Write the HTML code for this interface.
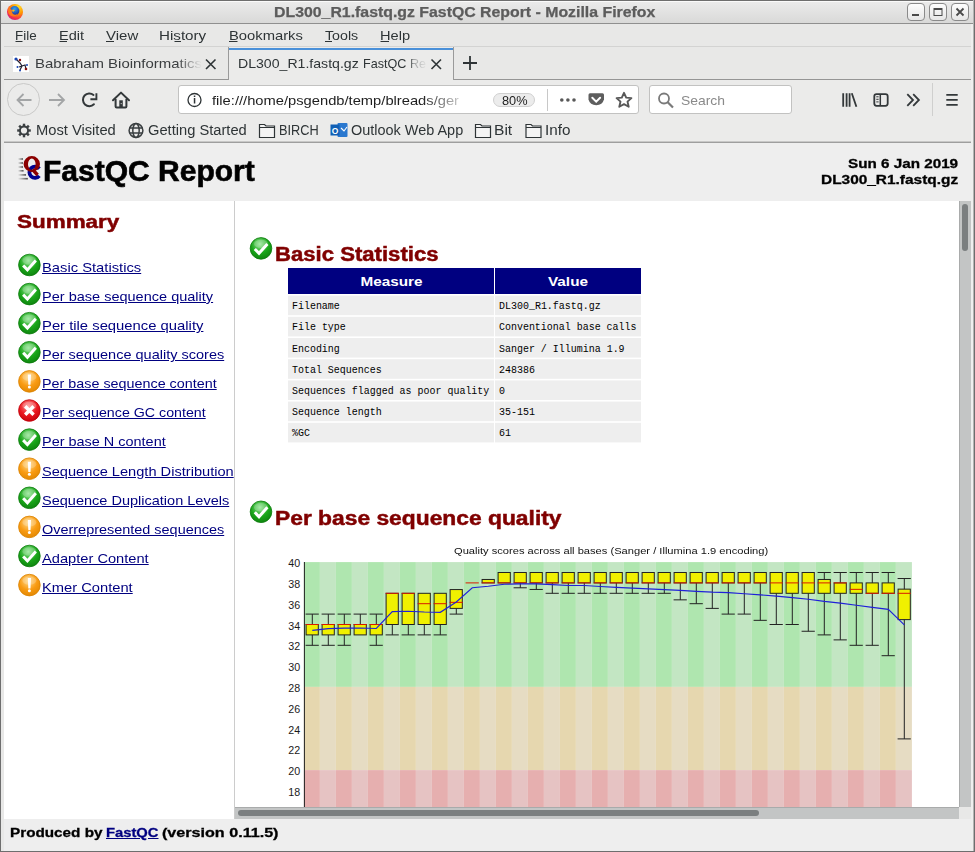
<!DOCTYPE html>
<html><head><meta charset="utf-8">
<style>
html,body{margin:0;padding:0;}
body{width:975px;height:852px;overflow:hidden;position:relative;background:#e8e8e7;font-family:"Liberation Sans",sans-serif;}
.a{position:absolute;}
.t{position:absolute;white-space:pre;line-height:1;transform-origin:0 0;}
svg{position:absolute;left:0;top:0;overflow:visible;}
</style></head><body>
<div class=a style='left:0;top:0;width:975px;height:852px;background:#e8e8e7'></div>
<div class=a style='left:0;top:0;width:975px;height:23px;background:linear-gradient(#ececec,#d9d9d8)'></div>
<div class=a style='left:0;top:0;width:975px;height:1px;background:#6e6e6e'></div>
<div class=a style='left:1px;top:1px;width:972px;height:1px;background:#fafafa'></div>
<div class=a style='left:0;top:23px;width:975px;height:1px;background:#8f8f8f'></div>
<div class=a style='left:1px;top:24px;width:972px;height:22px;background:#e8e8e7'></div>
<div class=a style='left:4px;top:46px;width:967px;height:1px;background:#d3d3d2'></div>
<div class=a style='left:4px;top:79px;width:967px;height:1px;background:#959595'></div>
<div class=a style='left:228px;top:47px;width:1px;height:33px;background:#9a9a9a'></div>
<div class=a style='left:229px;top:47px;width:224px;height:33px;background:#ebebea'></div>
<div class=a style='left:229px;top:48px;width:224px;height:2px;background:#4a90d9'></div>
<div class=a style='left:453px;top:47px;width:1px;height:33px;background:#9a9a9a'></div>
<div class=a style='left:4px;top:80px;width:967px;height:62px;background:#ebebea'></div>
<div class=a style='left:4px;top:141px;width:967px;height:1px;background:#c8c8c7'></div>
<div class=a style='left:4px;top:142px;width:967px;height:1px;background:#9e9e9e'></div>
<div class=a style='left:0;top:0;width:1px;height:852px;background:#6e6e6e'></div>
<div class=a style='left:971px;top:24px;width:3px;height:827px;background:#efefee'></div>
<div class=a style='left:973px;top:0;width:1px;height:852px;background:#b4b4b4'></div>
<div class=a style='left:974px;top:0;width:1px;height:852px;background:#6e6e6e'></div>
<div class=a style='left:0;top:851px;width:975px;height:1px;background:#6e6e6e'></div>
<div class=a style='left:178px;top:85px;width:461px;height:29px;box-sizing:border-box;border:1px solid #c2c2c1;border-radius:3px;background:#fff'></div>
<div class=a style='left:493px;top:93px;width:42px;height:14px;box-sizing:border-box;border:1px solid #d0d0d0;border-radius:7px;background:#ececec'></div>
<div class=a style='left:547px;top:89px;width:1px;height:22px;background:#c8c8c8'></div>
<div class=a style='left:649px;top:85px;width:143px;height:29px;box-sizing:border-box;border:1px solid #c2c2c1;border-radius:3px;background:#fff'></div>
<div class=a style='left:932px;top:83px;width:1px;height:33px;background:#cfcfce'></div>
<div class=a style='left:7px;top:83px;width:33px;height:33px;box-sizing:border-box;border:1px solid #c9c9c8;border-radius:50%;background:#ebebea'></div>
<div class=a style='left:4px;top:143px;width:967px;height:58px;background:#eeeeee'></div>
<div class=a style='left:4px;top:201px;width:230px;height:618px;background:#fff'></div>
<div class=a style='left:234px;top:201px;width:1px;height:606px;background:#cccccc'></div>
<div class=a style='left:235px;top:201px;width:724px;height:606px;background:#fff'></div>
<div class=a style='left:959px;top:201px;width:12px;height:606px;background:#c3c5c5;border-left:1px solid #a9abab;box-sizing:border-box'></div>
<div class=a style='left:962px;top:204px;width:6px;height:47px;background:#7b7f80;border-radius:3px'></div>
<div class=a style='left:235px;top:807px;width:724px;height:12px;background:#c3c5c5;border-top:1px solid #a9abab;box-sizing:border-box'></div>
<div class=a style='left:238px;top:810px;width:521px;height:6px;background:#7b7f80;border-radius:3px'></div>
<div class=a style='left:959px;top:807px;width:12px;height:12px;background:#e8e8e7'></div>
<div class=a style='left:234px;top:807px;width:1px;height:12px;background:#cccccc'></div>
<div class=a style='left:4px;top:819px;width:967px;height:32px;background:#eeeeee'></div>
<div class=a style='left:907px;top:3px;width:18px;height:18px;box-sizing:border-box;border:1px solid #8a8a8a;border-radius:4px;background:linear-gradient(#fdfdfd,#e6e6e6)'></div>
<div class=a style='left:929px;top:3px;width:18px;height:18px;box-sizing:border-box;border:1px solid #8a8a8a;border-radius:4px;background:linear-gradient(#fdfdfd,#e6e6e6)'></div>
<div class=a style='left:951px;top:3px;width:18px;height:18px;box-sizing:border-box;border:1px solid #8a8a8a;border-radius:4px;background:linear-gradient(#fdfdfd,#e6e6e6)'></div>
<svg width='975' height='852' viewBox='0 0 975 852'>
<rect x='912' y='14' width='7' height='2' fill='#4a4a4a'/>
<rect x='934' y='8.5' width='8' height='7' fill='none' stroke='#4a4a4a' stroke-width='1'/><rect x='934' y='8' width='8' height='2' fill='#4a4a4a'/>
<path d='M956.5 8.5 L963.5 15.5 M963.5 8.5 L956.5 15.5' stroke='#4a4a4a' stroke-width='1.8'/>
<defs><radialGradient id='ff' cx='0.7' cy='0.2' r='0.9'><stop offset='0' stop-color='#ffe226'/><stop offset='0.45' stop-color='#ff9500'/><stop offset='0.8' stop-color='#f5304a'/><stop offset='1' stop-color='#c1238a'/></radialGradient><radialGradient id='fb' cx='0.5' cy='0.3' r='0.6'><stop offset='0' stop-color='#2ba4f5'/><stop offset='1' stop-color='#243a9e'/></radialGradient></defs>
<circle cx='15' cy='12' r='8' fill='url(#ff)'/><circle cx='14.6' cy='10.8' r='4.8' fill='url(#fb)'/><path d='M9 6.5 Q10 9 12 10 Q11 12.5 13 14 Q15.5 15.5 18.5 13.5 Q16 17.5 11.5 16 Q8 14.5 8 11 Q8 8 9 6.5Z' fill='#ff7a1a'/><path d='M12 10 Q13.5 9 15 10.5 Q13.5 11 13 12.5Z' fill='#ffb21a'/>
<rect x='15.5' y='41' width='7.0' height='1' fill='#2e3436'/>
<rect x='59.5' y='41' width='7.5' height='1' fill='#2e3436'/>
<rect x='106' y='41' width='8' height='1' fill='#2e3436'/>
<rect x='174.5' y='41' width='6.5' height='1' fill='#2e3436'/>
<rect x='229' y='41' width='8.5' height='1' fill='#2e3436'/>
<rect x='325' y='41' width='7' height='1' fill='#2e3436'/>
<rect x='380.5' y='41' width='8.5' height='1' fill='#2e3436'/>
<rect x='13' y='56' width='16' height='16' fill='#fff'/>
<path d='M16 59 L20 63 L22 66 M19 67 L22 66 L25 65 L26 69 M20 70 L22 66' stroke='#223' stroke-width='1.2' fill='none'/><circle cx='16' cy='59' r='1.6' fill='#1844b0'/><circle cx='20' cy='60' r='1.2' fill='#8b1010'/><circle cx='26' cy='69' r='1.3' fill='#8b1010'/><circle cx='17.5' cy='67' r='1' fill='#1844b0'/><circle cx='20' cy='70.5' r='1' fill='#1844b0'/><circle cx='27' cy='65' r='1' fill='#1844b0'/>
<path d='M206 59.5 L215.5 69 M215.5 59.5 L206 69' stroke='#2e3436' stroke-width='1.6'/>
<path d='M431.5 59.5 L441 69 M441 59.5 L431.5 69' stroke='#2e3436' stroke-width='1.6'/>
<path d='M463 63 H477 M470 56 V70' stroke='#2e3436' stroke-width='1.8'/>
<path d='M31.5 100 H17.5 M23.5 94 L17.5 100 L23.5 106' stroke='#a3a5a6' stroke-width='1.8' fill='none'/>
<path d='M49 100 H64 M58 94 L64 100 L58 106' stroke='#a3a5a6' stroke-width='1.8' fill='none'/>
<path d='M93.5 94.9 A6.4 6.4 0 1 0 93.9 104.3' stroke='#33383a' stroke-width='2' fill='none' stroke-linecap='round'/><path d='M96.4 93.2 V99.2 H90.4' stroke='#33383a' stroke-width='1.9' fill='none'/>
<path d='M113 100.3 L121 92.6 L129 100.3' stroke='#33383a' stroke-width='2' fill='none' stroke-linejoin='round' stroke-linecap='round'/><path d='M115.6 99 V106.5 Q115.6 107.5 116.6 107.5 H125.4 Q126.4 107.5 126.4 106.5 V99' stroke='#33383a' stroke-width='2' fill='none'/><rect x='119.3' y='100.3' width='3.5' height='7' fill='#33383a'/><circle cx='121.2' cy='103.6' r='0.6' fill='#ddd'/>
<circle cx='194.5' cy='100' r='6.5' stroke='#2e3436' stroke-width='1.3' fill='none'/><rect x='193.8' y='98' width='1.5' height='5.5' fill='#2e3436'/><rect x='193.8' y='95.5' width='1.5' height='1.5' fill='#2e3436'/>
<circle cx='561.8' cy='100' r='1.8' fill='#585858'/><circle cx='567.9' cy='100' r='1.8' fill='#585858'/><circle cx='574' cy='100' r='1.8' fill='#585858'/>
<path d='M590 93.2 H602.5 Q604 93.2 604 94.7 V99.5 A8 7.5 0 0 1 588.5 99.5 V94.7 Q588.5 93.2 590 93.2 Z' fill='#5e5e5e'/><path d='M592.3 97.8 L596.2 101.6 L600.1 97.8' stroke='#fff' stroke-width='2' fill='none' stroke-linecap='round'/>
<path d='M624 92.8 L626.2 97.6 L631.4 98.1 L627.5 101.6 L628.7 106.8 L624 104.1 L619.3 106.8 L620.5 101.6 L616.6 98.1 L621.8 97.6 Z' stroke='#585858' stroke-width='1.9' fill='none' stroke-linejoin='round'/>
<circle cx='664' cy='98.5' r='5' stroke='#7a7a7a' stroke-width='1.8' fill='none'/><path d='M667.5 102 L673 107.5' stroke='#7a7a7a' stroke-width='2.2'/>
<path d='M843.2 93.3 V106.7 M846.6 93.3 V106.7 M849.6 93.3 V106.7 M851.8 93.3 L856.4 106.7' stroke='#33383a' stroke-width='1.8'/>
<rect x='874.3' y='94.2' width='13.4' height='11.6' rx='2.2' stroke='#33383a' stroke-width='1.8' fill='none'/><path d='M880.3 94 V106' stroke='#33383a' stroke-width='1.5'/><path d='M876.3 96.8 H878.6 M876.3 99.3 H878.6 M876.3 101.9 H878.6' stroke='#33383a' stroke-width='1'/>
<path d='M907.3 94.2 L913 100 L907.3 105.8 M913.2 94.2 L918.9 100 L913.2 105.8' stroke='#33383a' stroke-width='1.8' fill='none'/>
<path d='M946.3 94.8 H957.7 M946.3 99.8 H957.7 M946.3 104.8 H957.7' stroke='#33383a' stroke-width='1.7'/>
<g transform='translate(24,130.5)'><circle r='4.1' stroke='#3a3f41' stroke-width='2' fill='none'/><rect x='-1.2' y='-6.8' width='2.4' height='3' fill='#3a3f41' transform='rotate(0)'/><rect x='-1.2' y='-6.8' width='2.4' height='3' fill='#3a3f41' transform='rotate(45)'/><rect x='-1.2' y='-6.8' width='2.4' height='3' fill='#3a3f41' transform='rotate(90)'/><rect x='-1.2' y='-6.8' width='2.4' height='3' fill='#3a3f41' transform='rotate(135)'/><rect x='-1.2' y='-6.8' width='2.4' height='3' fill='#3a3f41' transform='rotate(180)'/><rect x='-1.2' y='-6.8' width='2.4' height='3' fill='#3a3f41' transform='rotate(225)'/><rect x='-1.2' y='-6.8' width='2.4' height='3' fill='#3a3f41' transform='rotate(270)'/><rect x='-1.2' y='-6.8' width='2.4' height='3' fill='#3a3f41' transform='rotate(315)'/></g>
<g transform='translate(136,130.5)' stroke='#3a3f41' fill='none' stroke-width='1.5'><circle r='6.9'/><ellipse rx='3.2' ry='6.9'/><path d='M-6.5 -2.6 H6.5 M-6.5 2.6 H6.5'/></g>
<path d='M259.5 124.5 H264.5 L266 126 H274.5 V137.5 H259.5 Z M259.5 127.5 H274.5' stroke='#2e3436' stroke-width='1.2' fill='#f4f4f4'/>
<path d='M475.5 124.5 H480.5 L482 126 H490.5 V137.5 H475.5 Z M475.5 127.5 H490.5' stroke='#2e3436' stroke-width='1.2' fill='#f4f4f4'/>
<path d='M526.0 124.5 H531.0 L532.5 126 H541.0 V137.5 H526.0 Z M526.0 127.5 H541.0' stroke='#2e3436' stroke-width='1.2' fill='#f4f4f4'/>
<rect x='337.5' y='123' width='10' height='14' rx='1' fill='#2a78cf'/><rect x='330.5' y='124.5' width='9' height='11' fill='#0f5fb5'/><text x='335' y='133.5' font-family='Liberation Sans' font-weight='700' font-size='8.5' fill='#fff' text-anchor='middle'>O</text><path d='M341 128 L344 131 L347 127' stroke='#fff' stroke-width='1.1' fill='none'/>
</svg>
<svg width='975' height='852' viewBox='0 0 975 852'>
<defs>
<radialGradient id='gok' cx='0.45' cy='0.3' r='0.75'><stop offset='0' stop-color='#8fe58f'/><stop offset='0.55' stop-color='#19a619'/><stop offset='1' stop-color='#0d800d'/></radialGradient>
<radialGradient id='gwarn' cx='0.45' cy='0.3' r='0.75'><stop offset='0' stop-color='#ffd98a'/><stop offset='0.55' stop-color='#f99b12'/><stop offset='1' stop-color='#e08600'/></radialGradient>
<radialGradient id='gerr' cx='0.45' cy='0.3' r='0.75'><stop offset='0' stop-color='#ff9090'/><stop offset='0.55' stop-color='#ea1820'/><stop offset='1' stop-color='#c4000a'/></radialGradient>
<clipPath id='plotclip'><rect x='235' y='201' width='724' height='606'/></clipPath>
</defs>
<linearGradient id='lg' x1='0' x2='1'><stop offset='0' stop-color='#eeeeee'/><stop offset='1' stop-color='#4a4a4a'/></linearGradient>
<rect x='18' y='158.2' width='5' height='1.6' fill='url(#lg)'/>
<rect x='18' y='162.2' width='5' height='1.6' fill='url(#lg)'/>
<rect x='18' y='166.2' width='5' height='1.6' fill='url(#lg)'/>
<rect x='18' y='170.0' width='5.5' height='1.6' fill='url(#lg)'/>
<rect x='18' y='174.1' width='8' height='1.6' fill='url(#lg)'/>
<rect x='18' y='177.89999999999998' width='9.8' height='1.6' fill='url(#lg)'/>
<path d='M39.3 168.7 A5.6 5.6 0 1 0 39.3 175.9' stroke='#00008f' stroke-width='3.8' fill='none'/>
<path fill-rule='evenodd' fill='#8b0000' d='M23.6 164 A8.2 7.9 0 1 0 40 164 A8.2 7.9 0 1 0 23.6 164 Z M28 164.2 A3.8 5.6 0 1 0 35.6 164.2 A3.8 5.6 0 1 0 28 164.2 Z'/>
<path d='M32.6 169.6 L37.6 175' stroke='#8b0000' stroke-width='3.4'/>
<circle cx='29.4' cy='265.0' r='10.8' fill='url(#gok)' stroke='#0b7a0b' stroke-width='0.8'/><ellipse cx='29.4' cy='260.5' rx='7' ry='4.2' fill='#fff' opacity='0.22'/><path d='M24.2 266.6 L27.4 269.9 L34.8 261.6' stroke='#fff' stroke-width='3.0' fill='none' stroke-linecap='square'/>
<circle cx='29.4' cy='294.1' r='10.8' fill='url(#gok)' stroke='#0b7a0b' stroke-width='0.8'/><ellipse cx='29.4' cy='289.6' rx='7' ry='4.2' fill='#fff' opacity='0.22'/><path d='M24.2 295.70000000000005 L27.4 299.0 L34.8 290.70000000000005' stroke='#fff' stroke-width='3.0' fill='none' stroke-linecap='square'/>
<circle cx='29.4' cy='323.2' r='10.8' fill='url(#gok)' stroke='#0b7a0b' stroke-width='0.8'/><ellipse cx='29.4' cy='318.7' rx='7' ry='4.2' fill='#fff' opacity='0.22'/><path d='M24.2 324.8 L27.4 328.09999999999997 L34.8 319.8' stroke='#fff' stroke-width='3.0' fill='none' stroke-linecap='square'/>
<circle cx='29.4' cy='352.3' r='10.8' fill='url(#gok)' stroke='#0b7a0b' stroke-width='0.8'/><ellipse cx='29.4' cy='347.8' rx='7' ry='4.2' fill='#fff' opacity='0.22'/><path d='M24.2 353.90000000000003 L27.4 357.2 L34.8 348.90000000000003' stroke='#fff' stroke-width='3.0' fill='none' stroke-linecap='square'/>
<circle cx='29.4' cy='381.4' r='10.8' fill='url(#gwarn)' stroke='#d98200' stroke-width='0.8'/><ellipse cx='29.4' cy='376.9' rx='7' ry='4.2' fill='#fff' opacity='0.22'/><path d='M27.799999999999997 374.4 H31.0 L30.5 384.79999999999995 H28.299999999999997 Z' fill='#fff'/><circle cx='29.4' cy='387.0' r='1.5' fill='#fff'/>
<circle cx='29.4' cy='410.5' r='10.8' fill='url(#gerr)' stroke='#c00008' stroke-width='0.8'/><ellipse cx='29.4' cy='406.0' rx='7' ry='4.2' fill='#fff' opacity='0.22'/><path d='M25.2 406.3 L33.6 414.7 M33.6 406.3 L25.2 414.7' stroke='#fff' stroke-width='3.4'/>
<circle cx='29.4' cy='439.6' r='10.8' fill='url(#gok)' stroke='#0b7a0b' stroke-width='0.8'/><ellipse cx='29.4' cy='435.1' rx='7' ry='4.2' fill='#fff' opacity='0.22'/><path d='M24.2 441.20000000000005 L27.4 444.5 L34.8 436.20000000000005' stroke='#fff' stroke-width='3.0' fill='none' stroke-linecap='square'/>
<circle cx='29.4' cy='468.70000000000005' r='10.8' fill='url(#gwarn)' stroke='#d98200' stroke-width='0.8'/><ellipse cx='29.4' cy='464.20000000000005' rx='7' ry='4.2' fill='#fff' opacity='0.22'/><path d='M27.799999999999997 461.70000000000005 H31.0 L30.5 472.1 H28.299999999999997 Z' fill='#fff'/><circle cx='29.4' cy='474.30000000000007' r='1.5' fill='#fff'/>
<circle cx='29.4' cy='497.8' r='10.8' fill='url(#gok)' stroke='#0b7a0b' stroke-width='0.8'/><ellipse cx='29.4' cy='493.3' rx='7' ry='4.2' fill='#fff' opacity='0.22'/><path d='M24.2 499.40000000000003 L27.4 502.7 L34.8 494.40000000000003' stroke='#fff' stroke-width='3.0' fill='none' stroke-linecap='square'/>
<circle cx='29.4' cy='526.9000000000001' r='10.8' fill='url(#gwarn)' stroke='#d98200' stroke-width='0.8'/><ellipse cx='29.4' cy='522.4000000000001' rx='7' ry='4.2' fill='#fff' opacity='0.22'/><path d='M27.799999999999997 519.9000000000001 H31.0 L30.5 530.3000000000001 H28.299999999999997 Z' fill='#fff'/><circle cx='29.4' cy='532.5000000000001' r='1.5' fill='#fff'/>
<circle cx='29.4' cy='556.0' r='10.8' fill='url(#gok)' stroke='#0b7a0b' stroke-width='0.8'/><ellipse cx='29.4' cy='551.5' rx='7' ry='4.2' fill='#fff' opacity='0.22'/><path d='M24.2 557.6 L27.4 560.9 L34.8 552.6' stroke='#fff' stroke-width='3.0' fill='none' stroke-linecap='square'/>
<circle cx='29.4' cy='585.1' r='10.8' fill='url(#gwarn)' stroke='#d98200' stroke-width='0.8'/><ellipse cx='29.4' cy='580.6' rx='7' ry='4.2' fill='#fff' opacity='0.22'/><path d='M27.799999999999997 578.1 H31.0 L30.5 588.5 H28.299999999999997 Z' fill='#fff'/><circle cx='29.4' cy='590.7' r='1.5' fill='#fff'/>
<circle cx='261.0' cy='248.4' r='10.8' fill='url(#gok)' stroke='#0b7a0b' stroke-width='0.8'/><ellipse cx='261.0' cy='243.9' rx='7' ry='4.2' fill='#fff' opacity='0.22'/><path d='M255.8 250.0 L259.0 253.3 L266.4 245.0' stroke='#fff' stroke-width='3.0' fill='none' stroke-linecap='square'/>
<circle cx='261.0' cy='511.8' r='10.8' fill='url(#gok)' stroke='#0b7a0b' stroke-width='0.8'/><ellipse cx='261.0' cy='507.3' rx='7' ry='4.2' fill='#fff' opacity='0.22'/><path d='M255.8 513.4 L259.0 516.7 L266.4 508.40000000000003' stroke='#fff' stroke-width='3.0' fill='none' stroke-linecap='square'/>
<rect x='288' y='268' width='206' height='26' fill='#000080'/><rect x='495' y='268' width='146' height='26' fill='#000080'/>
<rect x='288' y='295.6' width='206' height='19.6' fill='#eeeeee'/><rect x='495' y='295.6' width='146' height='19.6' fill='#eeeeee'/>
<text x='292' y='309.2' font-family='Liberation Mono' font-size='11' fill='#000' textLength='47.8' lengthAdjust='spacingAndGlyphs'>Filename</text>
<text x='499' y='309.2' font-family='Liberation Mono' font-size='11' fill='#000' textLength='101.7' lengthAdjust='spacingAndGlyphs'>DL300_R1.fastq.gz</text>
<rect x='288' y='316.8' width='206' height='19.6' fill='#eeeeee'/><rect x='495' y='316.8' width='146' height='19.6' fill='#eeeeee'/>
<text x='292' y='330.4' font-family='Liberation Mono' font-size='11' fill='#000' textLength='53.8' lengthAdjust='spacingAndGlyphs'>File type</text>
<text x='499' y='330.4' font-family='Liberation Mono' font-size='11' fill='#000' textLength='137.5' lengthAdjust='spacingAndGlyphs'>Conventional base calls</text>
<rect x='288' y='338.0' width='206' height='19.6' fill='#eeeeee'/><rect x='495' y='338.0' width='146' height='19.6' fill='#eeeeee'/>
<text x='292' y='351.6' font-family='Liberation Mono' font-size='11' fill='#000' textLength='47.8' lengthAdjust='spacingAndGlyphs'>Encoding</text>
<text x='499' y='351.6' font-family='Liberation Mono' font-size='11' fill='#000' textLength='125.6' lengthAdjust='spacingAndGlyphs'>Sanger / Illumina 1.9</text>
<rect x='288' y='359.2' width='206' height='19.6' fill='#eeeeee'/><rect x='495' y='359.2' width='146' height='19.6' fill='#eeeeee'/>
<text x='292' y='372.8' font-family='Liberation Mono' font-size='11' fill='#000' textLength='89.7' lengthAdjust='spacingAndGlyphs'>Total Sequences</text>
<text x='499' y='372.8' font-family='Liberation Mono' font-size='11' fill='#000' textLength='35.9' lengthAdjust='spacingAndGlyphs'>248386</text>
<rect x='288' y='380.4' width='206' height='19.6' fill='#eeeeee'/><rect x='495' y='380.4' width='146' height='19.6' fill='#eeeeee'/>
<text x='292' y='394.0' font-family='Liberation Mono' font-size='11' fill='#000' textLength='197.3' lengthAdjust='spacingAndGlyphs'>Sequences flagged as poor quality</text>
<text x='499' y='394.0' font-family='Liberation Mono' font-size='11' fill='#000' textLength='6.0' lengthAdjust='spacingAndGlyphs'>0</text>
<rect x='288' y='401.6' width='206' height='19.6' fill='#eeeeee'/><rect x='495' y='401.6' width='146' height='19.6' fill='#eeeeee'/>
<text x='292' y='415.2' font-family='Liberation Mono' font-size='11' fill='#000' textLength='89.7' lengthAdjust='spacingAndGlyphs'>Sequence length</text>
<text x='499' y='415.2' font-family='Liberation Mono' font-size='11' fill='#000' textLength='35.9' lengthAdjust='spacingAndGlyphs'>35-151</text>
<rect x='288' y='422.8' width='206' height='19.6' fill='#eeeeee'/><rect x='495' y='422.8' width='146' height='19.6' fill='#eeeeee'/>
<text x='292' y='436.4' font-family='Liberation Mono' font-size='11' fill='#000' textLength='17.9' lengthAdjust='spacingAndGlyphs'>%GC</text>
<text x='499' y='436.4' font-family='Liberation Mono' font-size='11' fill='#000' textLength='12.0' lengthAdjust='spacingAndGlyphs'>61</text>
<text x='391.5' y='285.8' font-family='Liberation Sans' font-weight='700' font-size='11.9' fill='#fff' text-anchor='middle' textLength='62' lengthAdjust='spacingAndGlyphs'>Measure</text>
<text x='568' y='285.8' font-family='Liberation Sans' font-weight='700' font-size='11.9' fill='#fff' text-anchor='middle' textLength='40' lengthAdjust='spacingAndGlyphs'>Value</text>
<g clip-path='url(#plotclip)'>
<rect x='303.90' y='562.10' width='16.0' height='124.80' fill='#afe6af'/>
<rect x='303.90' y='686.90' width='16.0' height='83.20' fill='#e6d7af'/>
<rect x='303.90' y='770.10' width='16.0' height='129.90' fill='#e6afaf'/>
<rect x='319.90' y='562.10' width='16.0' height='124.80' fill='#c3e6c3'/>
<rect x='319.90' y='686.90' width='16.0' height='83.20' fill='#e6dcc3'/>
<rect x='319.90' y='770.10' width='16.0' height='129.90' fill='#e6c3c3'/>
<rect x='335.90' y='562.10' width='16.0' height='124.80' fill='#afe6af'/>
<rect x='335.90' y='686.90' width='16.0' height='83.20' fill='#e6d7af'/>
<rect x='335.90' y='770.10' width='16.0' height='129.90' fill='#e6afaf'/>
<rect x='351.90' y='562.10' width='16.0' height='124.80' fill='#c3e6c3'/>
<rect x='351.90' y='686.90' width='16.0' height='83.20' fill='#e6dcc3'/>
<rect x='351.90' y='770.10' width='16.0' height='129.90' fill='#e6c3c3'/>
<rect x='367.90' y='562.10' width='16.0' height='124.80' fill='#afe6af'/>
<rect x='367.90' y='686.90' width='16.0' height='83.20' fill='#e6d7af'/>
<rect x='367.90' y='770.10' width='16.0' height='129.90' fill='#e6afaf'/>
<rect x='383.90' y='562.10' width='16.0' height='124.80' fill='#c3e6c3'/>
<rect x='383.90' y='686.90' width='16.0' height='83.20' fill='#e6dcc3'/>
<rect x='383.90' y='770.10' width='16.0' height='129.90' fill='#e6c3c3'/>
<rect x='399.90' y='562.10' width='16.0' height='124.80' fill='#afe6af'/>
<rect x='399.90' y='686.90' width='16.0' height='83.20' fill='#e6d7af'/>
<rect x='399.90' y='770.10' width='16.0' height='129.90' fill='#e6afaf'/>
<rect x='415.90' y='562.10' width='16.0' height='124.80' fill='#c3e6c3'/>
<rect x='415.90' y='686.90' width='16.0' height='83.20' fill='#e6dcc3'/>
<rect x='415.90' y='770.10' width='16.0' height='129.90' fill='#e6c3c3'/>
<rect x='431.90' y='562.10' width='16.0' height='124.80' fill='#afe6af'/>
<rect x='431.90' y='686.90' width='16.0' height='83.20' fill='#e6d7af'/>
<rect x='431.90' y='770.10' width='16.0' height='129.90' fill='#e6afaf'/>
<rect x='447.90' y='562.10' width='16.0' height='124.80' fill='#c3e6c3'/>
<rect x='447.90' y='686.90' width='16.0' height='83.20' fill='#e6dcc3'/>
<rect x='447.90' y='770.10' width='16.0' height='129.90' fill='#e6c3c3'/>
<rect x='463.90' y='562.10' width='16.0' height='124.80' fill='#afe6af'/>
<rect x='463.90' y='686.90' width='16.0' height='83.20' fill='#e6d7af'/>
<rect x='463.90' y='770.10' width='16.0' height='129.90' fill='#e6afaf'/>
<rect x='479.90' y='562.10' width='16.0' height='124.80' fill='#c3e6c3'/>
<rect x='479.90' y='686.90' width='16.0' height='83.20' fill='#e6dcc3'/>
<rect x='479.90' y='770.10' width='16.0' height='129.90' fill='#e6c3c3'/>
<rect x='495.90' y='562.10' width='16.0' height='124.80' fill='#afe6af'/>
<rect x='495.90' y='686.90' width='16.0' height='83.20' fill='#e6d7af'/>
<rect x='495.90' y='770.10' width='16.0' height='129.90' fill='#e6afaf'/>
<rect x='511.90' y='562.10' width='16.0' height='124.80' fill='#c3e6c3'/>
<rect x='511.90' y='686.90' width='16.0' height='83.20' fill='#e6dcc3'/>
<rect x='511.90' y='770.10' width='16.0' height='129.90' fill='#e6c3c3'/>
<rect x='527.90' y='562.10' width='16.0' height='124.80' fill='#afe6af'/>
<rect x='527.90' y='686.90' width='16.0' height='83.20' fill='#e6d7af'/>
<rect x='527.90' y='770.10' width='16.0' height='129.90' fill='#e6afaf'/>
<rect x='543.90' y='562.10' width='16.0' height='124.80' fill='#c3e6c3'/>
<rect x='543.90' y='686.90' width='16.0' height='83.20' fill='#e6dcc3'/>
<rect x='543.90' y='770.10' width='16.0' height='129.90' fill='#e6c3c3'/>
<rect x='559.90' y='562.10' width='16.0' height='124.80' fill='#afe6af'/>
<rect x='559.90' y='686.90' width='16.0' height='83.20' fill='#e6d7af'/>
<rect x='559.90' y='770.10' width='16.0' height='129.90' fill='#e6afaf'/>
<rect x='575.90' y='562.10' width='16.0' height='124.80' fill='#c3e6c3'/>
<rect x='575.90' y='686.90' width='16.0' height='83.20' fill='#e6dcc3'/>
<rect x='575.90' y='770.10' width='16.0' height='129.90' fill='#e6c3c3'/>
<rect x='591.90' y='562.10' width='16.0' height='124.80' fill='#afe6af'/>
<rect x='591.90' y='686.90' width='16.0' height='83.20' fill='#e6d7af'/>
<rect x='591.90' y='770.10' width='16.0' height='129.90' fill='#e6afaf'/>
<rect x='607.90' y='562.10' width='16.0' height='124.80' fill='#c3e6c3'/>
<rect x='607.90' y='686.90' width='16.0' height='83.20' fill='#e6dcc3'/>
<rect x='607.90' y='770.10' width='16.0' height='129.90' fill='#e6c3c3'/>
<rect x='623.90' y='562.10' width='16.0' height='124.80' fill='#afe6af'/>
<rect x='623.90' y='686.90' width='16.0' height='83.20' fill='#e6d7af'/>
<rect x='623.90' y='770.10' width='16.0' height='129.90' fill='#e6afaf'/>
<rect x='639.90' y='562.10' width='16.0' height='124.80' fill='#c3e6c3'/>
<rect x='639.90' y='686.90' width='16.0' height='83.20' fill='#e6dcc3'/>
<rect x='639.90' y='770.10' width='16.0' height='129.90' fill='#e6c3c3'/>
<rect x='655.90' y='562.10' width='16.0' height='124.80' fill='#afe6af'/>
<rect x='655.90' y='686.90' width='16.0' height='83.20' fill='#e6d7af'/>
<rect x='655.90' y='770.10' width='16.0' height='129.90' fill='#e6afaf'/>
<rect x='671.90' y='562.10' width='16.0' height='124.80' fill='#c3e6c3'/>
<rect x='671.90' y='686.90' width='16.0' height='83.20' fill='#e6dcc3'/>
<rect x='671.90' y='770.10' width='16.0' height='129.90' fill='#e6c3c3'/>
<rect x='687.90' y='562.10' width='16.0' height='124.80' fill='#afe6af'/>
<rect x='687.90' y='686.90' width='16.0' height='83.20' fill='#e6d7af'/>
<rect x='687.90' y='770.10' width='16.0' height='129.90' fill='#e6afaf'/>
<rect x='703.90' y='562.10' width='16.0' height='124.80' fill='#c3e6c3'/>
<rect x='703.90' y='686.90' width='16.0' height='83.20' fill='#e6dcc3'/>
<rect x='703.90' y='770.10' width='16.0' height='129.90' fill='#e6c3c3'/>
<rect x='719.90' y='562.10' width='16.0' height='124.80' fill='#afe6af'/>
<rect x='719.90' y='686.90' width='16.0' height='83.20' fill='#e6d7af'/>
<rect x='719.90' y='770.10' width='16.0' height='129.90' fill='#e6afaf'/>
<rect x='735.90' y='562.10' width='16.0' height='124.80' fill='#c3e6c3'/>
<rect x='735.90' y='686.90' width='16.0' height='83.20' fill='#e6dcc3'/>
<rect x='735.90' y='770.10' width='16.0' height='129.90' fill='#e6c3c3'/>
<rect x='751.90' y='562.10' width='16.0' height='124.80' fill='#afe6af'/>
<rect x='751.90' y='686.90' width='16.0' height='83.20' fill='#e6d7af'/>
<rect x='751.90' y='770.10' width='16.0' height='129.90' fill='#e6afaf'/>
<rect x='767.90' y='562.10' width='16.0' height='124.80' fill='#c3e6c3'/>
<rect x='767.90' y='686.90' width='16.0' height='83.20' fill='#e6dcc3'/>
<rect x='767.90' y='770.10' width='16.0' height='129.90' fill='#e6c3c3'/>
<rect x='783.90' y='562.10' width='16.0' height='124.80' fill='#afe6af'/>
<rect x='783.90' y='686.90' width='16.0' height='83.20' fill='#e6d7af'/>
<rect x='783.90' y='770.10' width='16.0' height='129.90' fill='#e6afaf'/>
<rect x='799.90' y='562.10' width='16.0' height='124.80' fill='#c3e6c3'/>
<rect x='799.90' y='686.90' width='16.0' height='83.20' fill='#e6dcc3'/>
<rect x='799.90' y='770.10' width='16.0' height='129.90' fill='#e6c3c3'/>
<rect x='815.90' y='562.10' width='16.0' height='124.80' fill='#afe6af'/>
<rect x='815.90' y='686.90' width='16.0' height='83.20' fill='#e6d7af'/>
<rect x='815.90' y='770.10' width='16.0' height='129.90' fill='#e6afaf'/>
<rect x='831.90' y='562.10' width='16.0' height='124.80' fill='#c3e6c3'/>
<rect x='831.90' y='686.90' width='16.0' height='83.20' fill='#e6dcc3'/>
<rect x='831.90' y='770.10' width='16.0' height='129.90' fill='#e6c3c3'/>
<rect x='847.90' y='562.10' width='16.0' height='124.80' fill='#afe6af'/>
<rect x='847.90' y='686.90' width='16.0' height='83.20' fill='#e6d7af'/>
<rect x='847.90' y='770.10' width='16.0' height='129.90' fill='#e6afaf'/>
<rect x='863.90' y='562.10' width='16.0' height='124.80' fill='#c3e6c3'/>
<rect x='863.90' y='686.90' width='16.0' height='83.20' fill='#e6dcc3'/>
<rect x='863.90' y='770.10' width='16.0' height='129.90' fill='#e6c3c3'/>
<rect x='879.90' y='562.10' width='16.0' height='124.80' fill='#afe6af'/>
<rect x='879.90' y='686.90' width='16.0' height='83.20' fill='#e6d7af'/>
<rect x='879.90' y='770.10' width='16.0' height='129.90' fill='#e6afaf'/>
<rect x='895.90' y='562.10' width='16.0' height='124.80' fill='#c3e6c3'/>
<rect x='895.90' y='686.90' width='16.0' height='83.20' fill='#e6dcc3'/>
<rect x='895.90' y='770.10' width='16.0' height='129.90' fill='#e6c3c3'/>
<rect x='303.9' y='562' width='1' height='300' fill='#222'/>
<rect x='306.10' y='624.50' width='12.20' height='10.40' fill='#f0f000' stroke='#222' stroke-width='1'/>
<path d='M312.30 614.10 V624.50 M305.60 614.10 H318.80' stroke='#222' stroke-width='1'/>
<path d='M312.30 645.30 V634.90 M305.60 645.30 H318.80' stroke='#222' stroke-width='1'/>
<path d='M305.60 624.50 H318.80' stroke='#d81a00' stroke-width='1'/>
<rect x='322.10' y='624.50' width='12.20' height='10.40' fill='#f0f000' stroke='#222' stroke-width='1'/>
<path d='M328.30 614.10 V624.50 M321.60 614.10 H334.80' stroke='#222' stroke-width='1'/>
<path d='M328.30 645.30 V634.90 M321.60 645.30 H334.80' stroke='#222' stroke-width='1'/>
<path d='M321.60 624.50 H334.80' stroke='#d81a00' stroke-width='1'/>
<rect x='338.10' y='624.50' width='12.20' height='10.40' fill='#f0f000' stroke='#222' stroke-width='1'/>
<path d='M344.30 614.10 V624.50 M337.60 614.10 H350.80' stroke='#222' stroke-width='1'/>
<path d='M344.30 645.30 V634.90 M337.60 645.30 H350.80' stroke='#222' stroke-width='1'/>
<path d='M337.60 624.50 H350.80' stroke='#d81a00' stroke-width='1'/>
<rect x='354.10' y='624.50' width='12.20' height='10.40' fill='#f0f000' stroke='#222' stroke-width='1'/>
<path d='M360.30 614.10 V624.50 M353.60 614.10 H366.80' stroke='#222' stroke-width='1'/>
<path d='M353.60 624.50 H366.80' stroke='#d81a00' stroke-width='1'/>
<rect x='370.10' y='624.50' width='12.20' height='10.40' fill='#f0f000' stroke='#222' stroke-width='1'/>
<path d='M376.30 614.10 V624.50 M369.60 614.10 H382.80' stroke='#222' stroke-width='1'/>
<path d='M376.30 645.30 V634.90 M369.60 645.30 H382.80' stroke='#222' stroke-width='1'/>
<path d='M369.60 624.50 H382.80' stroke='#d81a00' stroke-width='1'/>
<rect x='386.10' y='593.30' width='12.20' height='31.20' fill='#f0f000' stroke='#222' stroke-width='1'/>
<path d='M392.30 634.90 V624.50 M385.60 634.90 H398.80' stroke='#222' stroke-width='1'/>
<path d='M385.60 593.30 H398.80' stroke='#d81a00' stroke-width='1'/>
<rect x='402.10' y='593.30' width='12.20' height='31.20' fill='#f0f000' stroke='#222' stroke-width='1'/>
<path d='M408.30 634.90 V624.50 M401.60 634.90 H414.80' stroke='#222' stroke-width='1'/>
<path d='M401.60 593.30 H414.80' stroke='#d81a00' stroke-width='1'/>
<rect x='418.10' y='593.30' width='12.20' height='31.20' fill='#f0f000' stroke='#222' stroke-width='1'/>
<path d='M424.30 634.90 V624.50 M417.60 634.90 H430.80' stroke='#222' stroke-width='1'/>
<path d='M417.60 603.70 H430.80' stroke='#d81a00' stroke-width='1'/>
<rect x='434.10' y='593.30' width='12.20' height='31.20' fill='#f0f000' stroke='#222' stroke-width='1'/>
<path d='M440.30 634.90 V624.50 M433.60 634.90 H446.80' stroke='#222' stroke-width='1'/>
<path d='M433.60 603.70 H446.80' stroke='#d81a00' stroke-width='1'/>
<rect x='450.10' y='589.56' width='12.20' height='18.82' fill='#f0f000' stroke='#222' stroke-width='1'/>
<path d='M456.30 614.10 V608.38 M449.60 614.10 H462.80' stroke='#222' stroke-width='1'/>
<path d='M449.60 602.35 H462.80' stroke='#d81a00' stroke-width='1'/>
<path d='M465.60 582.90 H478.80' stroke='#d81a00' stroke-width='1'/>
<rect x='482.10' y='579.47' width='12.20' height='3.43' fill='#f0f000' stroke='#222' stroke-width='1'/>
<path d='M481.60 582.90 H494.80' stroke='#d81a00' stroke-width='1'/>
<rect x='498.10' y='572.50' width='12.20' height='10.40' fill='#f0f000' stroke='#222' stroke-width='1'/>
<path d='M497.60 582.90 H510.80' stroke='#d81a00' stroke-width='1'/>
<rect x='514.10' y='572.50' width='12.20' height='10.40' fill='#f0f000' stroke='#222' stroke-width='1'/>
<path d='M520.30 587.79 V582.90 M513.60 587.79 H526.80' stroke='#222' stroke-width='1'/>
<path d='M513.60 582.90 H526.80' stroke='#d81a00' stroke-width='1'/>
<rect x='530.10' y='572.50' width='12.20' height='10.40' fill='#f0f000' stroke='#222' stroke-width='1'/>
<path d='M536.30 589.45 V582.90 M529.60 589.45 H542.80' stroke='#222' stroke-width='1'/>
<path d='M529.60 582.90 H542.80' stroke='#d81a00' stroke-width='1'/>
<rect x='546.10' y='572.50' width='12.20' height='10.40' fill='#f0f000' stroke='#222' stroke-width='1'/>
<path d='M552.30 593.30 V582.90 M545.60 593.30 H558.80' stroke='#222' stroke-width='1'/>
<path d='M545.60 582.90 H558.80' stroke='#d81a00' stroke-width='1'/>
<rect x='562.10' y='572.50' width='12.20' height='10.40' fill='#f0f000' stroke='#222' stroke-width='1'/>
<path d='M568.30 593.30 V582.90 M561.60 593.30 H574.80' stroke='#222' stroke-width='1'/>
<path d='M561.60 582.90 H574.80' stroke='#d81a00' stroke-width='1'/>
<rect x='578.10' y='572.50' width='12.20' height='10.40' fill='#f0f000' stroke='#222' stroke-width='1'/>
<path d='M584.30 593.30 V582.90 M577.60 593.30 H590.80' stroke='#222' stroke-width='1'/>
<path d='M577.60 582.90 H590.80' stroke='#d81a00' stroke-width='1'/>
<rect x='594.10' y='572.50' width='12.20' height='10.40' fill='#f0f000' stroke='#222' stroke-width='1'/>
<path d='M600.30 593.30 V582.90 M593.60 593.30 H606.80' stroke='#222' stroke-width='1'/>
<path d='M593.60 582.90 H606.80' stroke='#d81a00' stroke-width='1'/>
<rect x='610.10' y='572.50' width='12.20' height='10.40' fill='#f0f000' stroke='#222' stroke-width='1'/>
<path d='M616.30 593.30 V582.90 M609.60 593.30 H622.80' stroke='#222' stroke-width='1'/>
<path d='M609.60 582.90 H622.80' stroke='#d81a00' stroke-width='1'/>
<rect x='626.10' y='572.50' width='12.20' height='10.40' fill='#f0f000' stroke='#222' stroke-width='1'/>
<path d='M632.30 593.30 V582.90 M625.60 593.30 H638.80' stroke='#222' stroke-width='1'/>
<path d='M625.60 582.90 H638.80' stroke='#d81a00' stroke-width='1'/>
<rect x='642.10' y='572.50' width='12.20' height='10.40' fill='#f0f000' stroke='#222' stroke-width='1'/>
<path d='M648.30 593.30 V582.90 M641.60 593.30 H654.80' stroke='#222' stroke-width='1'/>
<path d='M641.60 582.90 H654.80' stroke='#d81a00' stroke-width='1'/>
<rect x='658.10' y='572.50' width='12.20' height='10.40' fill='#f0f000' stroke='#222' stroke-width='1'/>
<path d='M664.30 593.30 V582.90 M657.60 593.30 H670.80' stroke='#222' stroke-width='1'/>
<path d='M657.60 582.90 H670.80' stroke='#d81a00' stroke-width='1'/>
<rect x='674.10' y='572.50' width='12.20' height='10.40' fill='#f0f000' stroke='#222' stroke-width='1'/>
<path d='M680.30 599.85 V582.90 M673.60 599.85 H686.80' stroke='#222' stroke-width='1'/>
<path d='M673.60 582.90 H686.80' stroke='#d81a00' stroke-width='1'/>
<rect x='690.10' y='572.50' width='12.20' height='10.40' fill='#f0f000' stroke='#222' stroke-width='1'/>
<path d='M696.30 603.70 V582.90 M689.60 603.70 H702.80' stroke='#222' stroke-width='1'/>
<path d='M689.60 582.90 H702.80' stroke='#d81a00' stroke-width='1'/>
<rect x='706.10' y='572.50' width='12.20' height='10.40' fill='#f0f000' stroke='#222' stroke-width='1'/>
<path d='M712.30 608.38 V582.90 M705.60 608.38 H718.80' stroke='#222' stroke-width='1'/>
<path d='M705.60 582.90 H718.80' stroke='#d81a00' stroke-width='1'/>
<rect x='722.10' y='572.50' width='12.20' height='10.40' fill='#f0f000' stroke='#222' stroke-width='1'/>
<path d='M728.30 614.10 V582.90 M721.60 614.10 H734.80' stroke='#222' stroke-width='1'/>
<path d='M721.60 582.90 H734.80' stroke='#d81a00' stroke-width='1'/>
<rect x='738.10' y='572.50' width='12.20' height='10.40' fill='#f0f000' stroke='#222' stroke-width='1'/>
<path d='M744.30 614.10 V582.90 M737.60 614.10 H750.80' stroke='#222' stroke-width='1'/>
<path d='M737.60 582.90 H750.80' stroke='#d81a00' stroke-width='1'/>
<rect x='754.10' y='572.50' width='12.20' height='10.40' fill='#f0f000' stroke='#222' stroke-width='1'/>
<path d='M760.30 620.34 V582.90 M753.60 620.34 H766.80' stroke='#222' stroke-width='1'/>
<path d='M753.60 582.90 H766.80' stroke='#d81a00' stroke-width='1'/>
<rect x='770.10' y='572.50' width='12.20' height='20.80' fill='#f0f000' stroke='#222' stroke-width='1'/>
<path d='M776.30 624.50 V593.30 M769.60 624.50 H782.80' stroke='#222' stroke-width='1'/>
<path d='M769.60 582.90 H782.80' stroke='#d81a00' stroke-width='1'/>
<rect x='786.10' y='572.50' width='12.20' height='20.80' fill='#f0f000' stroke='#222' stroke-width='1'/>
<path d='M792.30 624.50 V593.30 M785.60 624.50 H798.80' stroke='#222' stroke-width='1'/>
<path d='M785.60 582.90 H798.80' stroke='#d81a00' stroke-width='1'/>
<rect x='802.10' y='572.50' width='12.20' height='20.80' fill='#f0f000' stroke='#222' stroke-width='1'/>
<path d='M808.30 631.26 V593.30 M801.60 631.26 H814.80' stroke='#222' stroke-width='1'/>
<path d='M801.60 582.90 H814.80' stroke='#d81a00' stroke-width='1'/>
<rect x='818.10' y='579.47' width='12.20' height='13.83' fill='#f0f000' stroke='#222' stroke-width='1'/>
<path d='M824.30 572.50 V579.47 M817.60 572.50 H830.80' stroke='#222' stroke-width='1'/>
<path d='M824.30 634.90 V593.30 M817.60 634.90 H830.80' stroke='#222' stroke-width='1'/>
<path d='M817.60 582.90 H830.80' stroke='#d81a00' stroke-width='1'/>
<rect x='834.10' y='582.90' width='12.20' height='10.40' fill='#f0f000' stroke='#222' stroke-width='1'/>
<path d='M840.30 572.50 V582.90 M833.60 572.50 H846.80' stroke='#222' stroke-width='1'/>
<path d='M840.30 639.89 V593.30 M833.60 639.89 H846.80' stroke='#222' stroke-width='1'/>
<path d='M833.60 582.90 H846.80' stroke='#d81a00' stroke-width='1'/>
<rect x='850.10' y='582.90' width='12.20' height='10.40' fill='#f0f000' stroke='#222' stroke-width='1'/>
<path d='M856.30 572.50 V582.90 M849.60 572.50 H862.80' stroke='#222' stroke-width='1'/>
<path d='M856.30 645.30 V593.30 M849.60 645.30 H862.80' stroke='#222' stroke-width='1'/>
<path d='M849.60 589.35 H862.80' stroke='#d81a00' stroke-width='1'/>
<rect x='866.10' y='582.90' width='12.20' height='10.40' fill='#f0f000' stroke='#222' stroke-width='1'/>
<path d='M872.30 572.50 V582.90 M865.60 572.50 H878.80' stroke='#222' stroke-width='1'/>
<path d='M872.30 645.30 V593.30 M865.60 645.30 H878.80' stroke='#222' stroke-width='1'/>
<path d='M865.60 593.30 H878.80' stroke='#d81a00' stroke-width='1'/>
<rect x='882.10' y='582.90' width='12.20' height='10.40' fill='#f0f000' stroke='#222' stroke-width='1'/>
<path d='M888.30 572.50 V582.90 M881.60 572.50 H894.80' stroke='#222' stroke-width='1'/>
<path d='M888.30 655.70 V593.30 M881.60 655.70 H894.80' stroke='#222' stroke-width='1'/>
<path d='M881.60 593.30 H894.80' stroke='#d81a00' stroke-width='1'/>
<rect x='898.10' y='589.14' width='12.20' height='30.47' fill='#f0f000' stroke='#222' stroke-width='1'/>
<path d='M904.30 578.53 V589.14 M897.60 578.53 H910.80' stroke='#222' stroke-width='1'/>
<path d='M904.30 738.90 V619.61 M897.60 738.90 H910.80' stroke='#222' stroke-width='1'/>
<path d='M897.60 593.30 H910.80' stroke='#d81a00' stroke-width='1'/>
<polyline points='312.30,630.43 328.30,628.66 344.30,628.14 360.30,628.04 376.30,628.45 392.30,611.60 408.30,611.29 424.30,612.02 440.30,612.33 456.30,602.04 472.30,587.79 488.30,586.23 504.30,584.25 520.30,583.84 536.30,583.94 552.30,584.56 568.30,585.50 584.30,585.50 600.30,586.54 616.30,587.37 632.30,588.10 648.30,588.83 664.30,589.56 680.30,590.39 696.30,591.32 712.30,592.16 728.30,592.57 744.30,593.72 760.30,594.86 776.30,596.11 792.30,597.56 808.30,599.23 824.30,601.41 840.30,603.08 856.30,605.26 872.30,607.34 888.30,609.42 904.30,624.92' fill='none' stroke='#2020d8' stroke-width='1.15'/>
</g>
<text x='288.2' y='567.20' font-family='Liberation Sans' font-size='10.2' fill='#1a1a1a' textLength='11.9' lengthAdjust='spacingAndGlyphs'>40</text>
<text x='288.2' y='588.00' font-family='Liberation Sans' font-size='10.2' fill='#1a1a1a' textLength='11.9' lengthAdjust='spacingAndGlyphs'>38</text>
<text x='288.2' y='608.80' font-family='Liberation Sans' font-size='10.2' fill='#1a1a1a' textLength='11.9' lengthAdjust='spacingAndGlyphs'>36</text>
<text x='288.2' y='629.60' font-family='Liberation Sans' font-size='10.2' fill='#1a1a1a' textLength='11.9' lengthAdjust='spacingAndGlyphs'>34</text>
<text x='288.2' y='650.40' font-family='Liberation Sans' font-size='10.2' fill='#1a1a1a' textLength='11.9' lengthAdjust='spacingAndGlyphs'>32</text>
<text x='288.2' y='671.20' font-family='Liberation Sans' font-size='10.2' fill='#1a1a1a' textLength='11.9' lengthAdjust='spacingAndGlyphs'>30</text>
<text x='288.2' y='692.00' font-family='Liberation Sans' font-size='10.2' fill='#1a1a1a' textLength='11.9' lengthAdjust='spacingAndGlyphs'>28</text>
<text x='288.2' y='712.80' font-family='Liberation Sans' font-size='10.2' fill='#1a1a1a' textLength='11.9' lengthAdjust='spacingAndGlyphs'>26</text>
<text x='288.2' y='733.60' font-family='Liberation Sans' font-size='10.2' fill='#1a1a1a' textLength='11.9' lengthAdjust='spacingAndGlyphs'>24</text>
<text x='288.2' y='754.40' font-family='Liberation Sans' font-size='10.2' fill='#1a1a1a' textLength='11.9' lengthAdjust='spacingAndGlyphs'>22</text>
<text x='288.2' y='775.20' font-family='Liberation Sans' font-size='10.2' fill='#1a1a1a' textLength='11.9' lengthAdjust='spacingAndGlyphs'>20</text>
<text x='288.2' y='796.00' font-family='Liberation Sans' font-size='10.2' fill='#1a1a1a' textLength='11.9' lengthAdjust='spacingAndGlyphs'>18</text>
</svg>
<span class=t style='left:274.20px;top:5.00px;font-size:14px;font-weight:700;color:#5c5c5c;font-family:"Liberation Sans";transform:scaleX(1.1320);-webkit-text-stroke:0.25px #5c5c5c;'>DL300_R1.fastq.gz FastQC Report - Mozilla Firefox</span>
<span class=t style='left:15.10px;top:29.20px;font-size:13.6px;font-weight:400;color:#2e3436;font-family:"Liberation Sans";transform:scaleX(0.9860);'>File</span>
<span class=t style='left:58.80px;top:29.20px;font-size:13.6px;font-weight:400;color:#2e3436;font-family:"Liberation Sans";transform:scaleX(1.0709);'>Edit</span>
<span class=t style='left:105.50px;top:29.20px;font-size:13.6px;font-weight:400;color:#2e3436;font-family:"Liberation Sans";transform:scaleX(1.1020);'>View</span>
<span class=t style='left:159.30px;top:29.20px;font-size:13.6px;font-weight:400;color:#2e3436;font-family:"Liberation Sans";transform:scaleX(1.1159);'>History</span>
<span class=t style='left:228.60px;top:29.20px;font-size:13.6px;font-weight:400;color:#2e3436;font-family:"Liberation Sans";transform:scaleX(1.0868);'>Bookmarks</span>
<span class=t style='left:324.60px;top:29.20px;font-size:13.6px;font-weight:400;color:#2e3436;font-family:"Liberation Sans";transform:scaleX(1.0462);'>Tools</span>
<span class=t style='left:379.90px;top:29.20px;font-size:13.6px;font-weight:400;color:#2e3436;font-family:"Liberation Sans";transform:scaleX(1.0762);'>Help</span>
<span class=t style='left:34.50px;top:57.00px;font-size:13px;font-weight:400;color:#3a3d3f;font-family:"Liberation Sans";transform:scaleX(1.1499);padding-bottom:5px;-webkit-mask-image:linear-gradient(to right,#000 85%,transparent 100%);'>Babraham Bioinformatics</span>
<span class=t style='left:238.10px;top:57.00px;font-size:13px;font-weight:400;color:#2e3436;font-family:"Liberation Sans";transform:scaleX(1.0845);'>DL300_R1.fastq.gz</span>
<span class=t style='left:363.00px;top:57.00px;font-size:13px;font-weight:400;color:#2e3436;font-family:"Liberation Sans";transform:scaleX(0.9690);padding-bottom:5px;-webkit-mask-image:linear-gradient(to right,#000 74%,rgba(0,0,0,.4) 80%,rgba(0,0,0,0.05) 100%);'>FastQC Re</span>
<span class=t style='left:211.50px;top:93.50px;font-size:13px;font-weight:400;color:#1e1e1e;font-family:"Liberation Sans";transform:scaleX(1.1317);padding-bottom:5px;-webkit-mask-image:linear-gradient(to right,#000 85%,rgba(0,0,0,.25) 100%);'>file:///home/psgendb/temp/blreads/ger</span>
<span class=t style='left:502.00px;top:94.50px;font-size:12px;font-weight:400;color:#1e1e1e;font-family:"Liberation Sans";transform:scaleX(1.0611);'>80%</span>
<span class=t style='left:680.50px;top:93.50px;font-size:13px;font-weight:400;color:#8a8a8a;font-family:"Liberation Sans";transform:scaleX(1.0679);'>Search</span>
<span class=t style='left:36.00px;top:124.00px;font-size:13.8px;font-weight:400;color:#2e3436;font-family:"Liberation Sans";transform:scaleX(1.0653);'>Most Visited</span>
<span class=t style='left:148.20px;top:124.00px;font-size:13.8px;font-weight:400;color:#2e3436;font-family:"Liberation Sans";transform:scaleX(1.0645);'>Getting Started</span>
<span class=t style='left:279.00px;top:124.00px;font-size:13.8px;font-weight:400;color:#2e3436;font-family:"Liberation Sans";transform:scaleX(0.9246);'>BIRCH</span>
<span class=t style='left:350.80px;top:124.00px;font-size:13.8px;font-weight:400;color:#2e3436;font-family:"Liberation Sans";transform:scaleX(1.0474);'>Outlook Web App</span>
<span class=t style='left:494.30px;top:124.00px;font-size:13.8px;font-weight:400;color:#2e3436;font-family:"Liberation Sans";transform:scaleX(1.1298);'>Bit</span>
<span class=t style='left:544.60px;top:124.00px;font-size:13.8px;font-weight:400;color:#2e3436;font-family:"Liberation Sans";transform:scaleX(1.1036);'>Info</span>
<span class=t style='left:42.80px;top:157.00px;font-size:29.2px;font-weight:700;color:#000;font-family:"Liberation Sans";transform:scaleX(1.0279);-webkit-text-stroke:0.6px #000;'>FastQC Report</span>
<span class=t style='left:848.00px;top:158.00px;font-size:12.8px;font-weight:700;color:#000;font-family:"Liberation Sans";transform:scaleX(1.1905);-webkit-text-stroke:0.3px #000;'>Sun 6 Jan 2019</span>
<span class=t style='left:821.00px;top:174.10px;font-size:12.8px;font-weight:700;color:#000;font-family:"Liberation Sans";transform:scaleX(1.2048);-webkit-text-stroke:0.3px #000;'>DL300_R1.fastq.gz</span>
<span class=t style='left:17.00px;top:213.00px;font-size:18.5px;font-weight:700;color:#800000;font-family:"Liberation Sans";transform:scaleX(1.2131);-webkit-text-stroke:0.5px #800000;'>Summary</span>
<span class=t style='left:41.80px;top:260.80px;font-size:13.5px;font-weight:400;color:#000080;font-family:"Liberation Sans";transform:scaleX(1.0927);text-decoration:underline;text-underline-offset:1px;'>Basic Statistics</span>
<span class=t style='left:41.80px;top:289.90px;font-size:13.5px;font-weight:400;color:#000080;font-family:"Liberation Sans";transform:scaleX(1.0754);text-decoration:underline;text-underline-offset:1px;'>Per base sequence quality</span>
<span class=t style='left:41.80px;top:319.00px;font-size:13.5px;font-weight:400;color:#000080;font-family:"Liberation Sans";transform:scaleX(1.0973);text-decoration:underline;text-underline-offset:1px;'>Per tile sequence quality</span>
<span class=t style='left:41.80px;top:348.10px;font-size:13.5px;font-weight:400;color:#000080;font-family:"Liberation Sans";transform:scaleX(1.0743);text-decoration:underline;text-underline-offset:1px;'>Per sequence quality scores</span>
<span class=t style='left:41.80px;top:377.20px;font-size:13.5px;font-weight:400;color:#000080;font-family:"Liberation Sans";transform:scaleX(1.0628);text-decoration:underline;text-underline-offset:1px;'>Per base sequence content</span>
<span class=t style='left:41.80px;top:406.30px;font-size:13.5px;font-weight:400;color:#000080;font-family:"Liberation Sans";transform:scaleX(1.0538);text-decoration:underline;text-underline-offset:1px;'>Per sequence GC content</span>
<span class=t style='left:41.80px;top:435.40px;font-size:13.5px;font-weight:400;color:#000080;font-family:"Liberation Sans";transform:scaleX(1.0703);text-decoration:underline;text-underline-offset:1px;'>Per base N content</span>
<span class=t style='left:41.80px;top:464.50px;font-size:13.5px;font-weight:400;color:#000080;font-family:"Liberation Sans";transform:scaleX(1.0823);text-decoration:underline;text-underline-offset:1px;'>Sequence Length Distribution</span>
<span class=t style='left:41.80px;top:493.60px;font-size:13.5px;font-weight:400;color:#000080;font-family:"Liberation Sans";transform:scaleX(1.0751);text-decoration:underline;text-underline-offset:1px;'>Sequence Duplication Levels</span>
<span class=t style='left:41.80px;top:522.70px;font-size:13.5px;font-weight:400;color:#000080;font-family:"Liberation Sans";transform:scaleX(1.0695);text-decoration:underline;text-underline-offset:1px;'>Overrepresented sequences</span>
<span class=t style='left:41.80px;top:551.80px;font-size:13.5px;font-weight:400;color:#000080;font-family:"Liberation Sans";transform:scaleX(1.0851);text-decoration:underline;text-underline-offset:1px;'>Adapter Content</span>
<span class=t style='left:41.80px;top:580.90px;font-size:13.5px;font-weight:400;color:#000080;font-family:"Liberation Sans";transform:scaleX(1.0889);text-decoration:underline;text-underline-offset:1px;'>Kmer Content</span>
<span class=t style='left:275.00px;top:243.80px;font-size:20.3px;font-weight:700;color:#800000;font-family:"Liberation Sans";transform:scaleX(1.0905);-webkit-text-stroke:0.5px #800000;'>Basic Statistics</span>
<span class=t style='left:275.00px;top:507.60px;font-size:20.3px;font-weight:700;color:#800000;font-family:"Liberation Sans";transform:scaleX(1.1246);-webkit-text-stroke:0.5px #800000;'>Per base sequence quality</span>
<span class=t style='left:10.00px;top:826.50px;font-size:12.8px;font-weight:700;color:#000;font-family:"Liberation Sans";transform:scaleX(1.1933);-webkit-text-stroke:0.3px #000;'>Produced by</span>
<span class=t style='left:105.50px;top:826.50px;font-size:12.8px;font-weight:700;color:#000080;font-family:"Liberation Sans";transform:scaleX(1.1535);text-decoration:underline;-webkit-text-stroke:0.3px #000080;'>FastQC</span>
<span class=t style='left:162.00px;top:826.50px;font-size:12.8px;font-weight:700;color:#000;font-family:"Liberation Sans";transform:scaleX(1.2597);-webkit-text-stroke:0.3px #000;'>(version 0.11.5)</span>
<span class=t style='left:454.10px;top:546.80px;font-size:9.3px;font-weight:400;color:#111;font-family:"Liberation Sans";transform:scaleX(1.1969);'>Quality scores across all bases (Sanger / Illumina 1.9 encoding)</span>
</body></html>
